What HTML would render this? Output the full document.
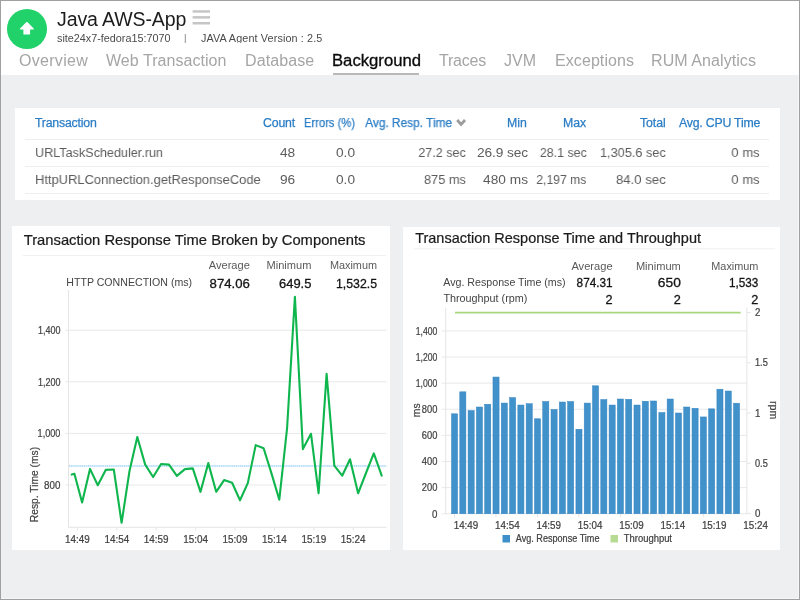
<!DOCTYPE html>
<html><head><meta charset="utf-8"><title>Java AWS-App - Background</title>
<style>
html,body{margin:0;padding:0}
body{width:800px;height:600px;overflow:hidden;position:relative;background:#eeeff1;font-family:"Liberation Sans",sans-serif}
.t{position:absolute;white-space:pre;display:block;will-change:transform}
.hdr{position:absolute;left:0;top:0;width:800px;height:75px;background:#fff}
.sub{position:absolute;left:0;top:0;width:800px;height:43px;overflow:hidden}
.circ{position:absolute;left:7.1px;top:9.2px;width:39.8px;height:39.6px;border-radius:50%;background:#21d26b}
.ul{position:absolute;left:332.5px;top:72.6px;width:86.5px;height:2.4px;background:#b9b9b9}
.card{position:absolute;background:#fff}
.sep{position:absolute;height:1.3px;background:#eeeeee}
.frame{position:absolute;left:0;top:0;width:798px;height:598px;border:1px solid #a0a0a0;box-shadow:inset -1px -1px 0 rgba(255,255,255,.45);z-index:9}
svg{position:absolute;left:0;top:0;will-change:transform}
svg text{font-family:"Liberation Sans",sans-serif}
</style></head><body>
<header class="hdr">
<div class="circ"></div>
<svg width="60" height="60" viewBox="0 0 60 60"><path d="M26.2 22.3 Q26.9 21.6 27.6 22.3 L33.7 28.4 Q34.4 29.5 33.3 29.5 H30.1 V34 Q30.1 34.6 29.5 34.6 H24 Q23.4 34.6 23.4 34 V29.5 H20.5 Q19.4 29.5 20.1 28.4 Z" fill="#fff"/></svg>
<svg width="220" height="30" viewBox="0 0 220 30"><g fill="#c6c6c6"><rect x="192.6" y="10.2" width="17.4" height="2.5"/><rect x="192.6" y="16.1" width="17.4" height="2.5"/><rect x="192.6" y="22" width="17.4" height="2.5"/></g></svg>
<span class="t" style="top:6.54px;font-size:19.5px;line-height:25px;color:#1c1c1c;letter-spacing:-0.096px;left:56.62px;">Java AWS-App</span><div class="sub"><span class="t" style="top:30.76px;font-size:10.8px;line-height:14px;color:#4a4a4a;left:56.77px;">site24x7-fedora15:7070</span><span class="t" style="top:32.01px;font-size:9.5px;line-height:12px;color:#777;left:184.22px;">|</span><span class="t" style="top:30.76px;font-size:10.8px;line-height:14px;color:#4a4a4a;letter-spacing:0.126px;left:200.87px;">JAVA Agent Version : 2.5</span></div><nav><span class="t" style="top:49.96px;font-size:16px;line-height:21px;color:#a5a5a5;letter-spacing:0.296px;left:18.96px;">Overview</span><span class="t" style="top:49.96px;font-size:16px;line-height:21px;color:#a5a5a5;letter-spacing:0.042px;left:105.96px;">Web Transaction</span><span class="t" style="top:49.96px;font-size:16px;line-height:21px;color:#a5a5a5;letter-spacing:0.101px;left:245.11px;">Database</span><span class="t" style="top:49.96px;font-size:16px;line-height:21px;color:#0a0a0a;left:331.83px;transform:scaleX(1.0418);transform-origin:0 50%;-webkit-text-stroke:0.3px #0a0a0a;">Background</span><span class="t" style="top:49.96px;font-size:16px;line-height:21px;color:#a5a5a5;letter-spacing:-0.231px;left:438.66px;">Traces</span><span class="t" style="top:49.96px;font-size:16px;line-height:21px;color:#a5a5a5;left:504.06px;">JVM</span><span class="t" style="top:49.96px;font-size:16px;line-height:21px;color:#a5a5a5;letter-spacing:0.077px;left:554.86px;">Exceptions</span><span class="t" style="top:49.96px;font-size:16px;line-height:21px;color:#a5a5a5;letter-spacing:0.077px;left:651.36px;">RUM Analytics</span></nav><div class="ul"></div>
</header>
<section>
<div class="card" style="left:15px;top:108px;width:765px;height:92px"></div>
<div class="sep" style="left:25px;top:138.5px;width:744px"></div><div class="sep" style="left:25px;top:166.2px;width:744px"></div><div class="sep" style="left:25px;top:193.1px;width:744px"></div><svg width="800" height="200" viewBox="0 0 800 200"><path d="M457.2 120 L461.1 124.4 L465 120" fill="none" stroke="#9c9c9c" stroke-width="2.8"/></svg>
<span class="t" style="top:115.24px;font-size:12.3px;line-height:16px;color:#2b7dc5;letter-spacing:-0.206px;left:34.51px;-webkit-text-stroke:0.25px #2b7dc5;">Transaction</span><span class="t" style="top:115.24px;font-size:12.3px;line-height:16px;color:#2b7dc5;letter-spacing:-0.148px;right:504.76px;-webkit-text-stroke:0.25px #2b7dc5;">Count</span><span class="t" style="top:115.24px;font-size:12.3px;line-height:16px;color:#2b7dc5;right:444.65px;transform:scaleX(0.9129);transform-origin:100% 50%;-webkit-text-stroke:0.25px #2b7dc5;">Errors (%)</span><span class="t" style="top:115.24px;font-size:12.3px;line-height:16px;color:#2b7dc5;right:348.03px;transform:scaleX(0.9649);transform-origin:100% 50%;-webkit-text-stroke:0.25px #2b7dc5;">Avg. Resp. Time</span><span class="t" style="top:115.24px;font-size:12.3px;line-height:16px;color:#2b7dc5;right:272.71px;-webkit-text-stroke:0.25px #2b7dc5;">Min</span><span class="t" style="top:115.24px;font-size:12.3px;line-height:16px;color:#2b7dc5;right:213.51px;-webkit-text-stroke:0.25px #2b7dc5;">Max</span><span class="t" style="top:115.24px;font-size:12.3px;line-height:16px;color:#2b7dc5;letter-spacing:-0.062px;right:134.57px;-webkit-text-stroke:0.25px #2b7dc5;">Total</span><span class="t" style="top:115.24px;font-size:12.3px;line-height:16px;color:#2b7dc5;letter-spacing:-0.208px;right:40.32px;-webkit-text-stroke:0.25px #2b7dc5;">Avg. CPU Time</span><span class="t" style="top:143.55px;font-size:13.7px;line-height:18px;color:#5c5c5c;left:34.80px;transform:scaleX(0.9211);transform-origin:0 50%;">URLTaskScheduler.run</span><span class="t" style="top:143.55px;font-size:13.7px;line-height:18px;color:#5c5c5c;right:504.45px;">48</span><span class="t" style="top:143.55px;font-size:13.7px;line-height:18px;color:#5c5c5c;right:444.85px;">0.0</span><span class="t" style="top:143.55px;font-size:13.7px;line-height:18px;color:#5c5c5c;right:333.90px;transform:scaleX(0.9164);transform-origin:100% 50%;">27.2 sec</span><span class="t" style="top:143.55px;font-size:13.7px;line-height:18px;color:#5c5c5c;letter-spacing:-0.104px;right:272.56px;">26.9 sec</span><span class="t" style="top:143.55px;font-size:13.7px;line-height:18px;color:#5c5c5c;right:213.50px;transform:scaleX(0.9048);transform-origin:100% 50%;">28.1 sec</span><span class="t" style="top:143.55px;font-size:13.7px;line-height:18px;color:#5c5c5c;right:134.49px;transform:scaleX(0.9299);transform-origin:100% 50%;">1,305.6 sec</span><span class="t" style="top:143.55px;font-size:13.7px;line-height:18px;color:#5c5c5c;right:39.98px;transform:scaleX(0.9545);transform-origin:100% 50%;">0 ms</span><span class="t" style="top:170.95px;font-size:13.7px;line-height:18px;color:#5c5c5c;left:34.78px;transform:scaleX(0.9448);transform-origin:0 50%;">HttpURLConnection.getResponseCode</span><span class="t" style="top:170.95px;font-size:13.7px;line-height:18px;color:#5c5c5c;right:504.45px;">96</span><span class="t" style="top:170.95px;font-size:13.7px;line-height:18px;color:#5c5c5c;right:444.85px;">0.0</span><span class="t" style="top:170.95px;font-size:13.7px;line-height:18px;color:#5c5c5c;right:333.89px;transform:scaleX(0.9339);transform-origin:100% 50%;">875 ms</span><span class="t" style="top:170.95px;font-size:13.7px;line-height:18px;color:#5c5c5c;letter-spacing:0.026px;right:272.43px;">480 ms</span><span class="t" style="top:170.95px;font-size:13.7px;line-height:18px;color:#5c5c5c;right:213.51px;transform:scaleX(0.8883);transform-origin:100% 50%;">2,197 ms</span><span class="t" style="top:170.95px;font-size:13.7px;line-height:18px;color:#5c5c5c;right:134.47px;transform:scaleX(0.9627);transform-origin:100% 50%;">84.0 sec</span><span class="t" style="top:170.95px;font-size:13.7px;line-height:18px;color:#5c5c5c;right:39.98px;transform:scaleX(0.9545);transform-origin:100% 50%;">0 ms</span>
</section>
<section>
<div class="card" style="left:12.3px;top:226.2px;width:377.7px;height:323.6px"></div>
<svg width="800" height="600" viewBox="0 0 800 600">
<text x="23.70" y="245.00" font-size="14.6" fill="#1b1b1b" text-anchor="start" textLength="341.80" lengthAdjust="spacingAndGlyphs" stroke="#1b1b1b" stroke-width="0.22">Transaction Response Time Broken by Components</text>
<rect x="22.8" y="255" width="363" height="1" fill="#f0f0f0"/>
<text x="249.90" y="269.40" font-size="11" fill="#5a5a5a" text-anchor="end" textLength="41.20" lengthAdjust="spacingAndGlyphs">Average</text>
<text x="311.40" y="269.40" font-size="11" fill="#5a5a5a" text-anchor="end" textLength="44.90" lengthAdjust="spacingAndGlyphs">Minimum</text>
<text x="377.00" y="269.40" font-size="11" fill="#5a5a5a" text-anchor="end" textLength="47.10" lengthAdjust="spacingAndGlyphs">Maximum</text>
<text x="66.30" y="285.60" font-size="11.2" fill="#444" text-anchor="start" textLength="125.80" lengthAdjust="spacingAndGlyphs">HTTP CONNECTION (ms)</text>
<text x="249.90" y="287.60" font-size="12.7" fill="#141414" text-anchor="end" textLength="40.30" lengthAdjust="spacingAndGlyphs" stroke="#141414" stroke-width="0.3">874.06</text>
<text x="311.40" y="287.60" font-size="12.7" fill="#141414" text-anchor="end" textLength="32.40" lengthAdjust="spacingAndGlyphs" stroke="#141414" stroke-width="0.3">649.5</text>
<text x="377.00" y="287.60" font-size="12.7" fill="#141414" text-anchor="end" textLength="41.00" lengthAdjust="spacingAndGlyphs" stroke="#141414" stroke-width="0.3">1,532.5</text>
<rect x="65.3" y="329.70" width="321.2" height="1" fill="#e9e9e9"/>
<rect x="65.3" y="381.30" width="321.2" height="1" fill="#e9e9e9"/>
<rect x="65.3" y="432.90" width="321.2" height="1" fill="#e9e9e9"/>
<rect x="65.3" y="484.50" width="321.2" height="1" fill="#e9e9e9"/>
<rect x="68" y="290" width="1" height="237.7" fill="#e5e5e5"/>
<rect x="68" y="526.8" width="318.5" height="1" fill="#e5e5e5"/>
<text x="60.40" y="334.10" font-size="10.7" fill="#404040" text-anchor="end" textLength="22.50" lengthAdjust="spacingAndGlyphs" stroke="#404040" stroke-width="0.22">1,400</text>
<text x="60.40" y="385.70" font-size="10.7" fill="#404040" text-anchor="end" textLength="22.50" lengthAdjust="spacingAndGlyphs" stroke="#404040" stroke-width="0.22">1,200</text>
<text x="60.40" y="437.30" font-size="10.7" fill="#404040" text-anchor="end" textLength="22.80" lengthAdjust="spacingAndGlyphs" stroke="#404040" stroke-width="0.22">1,000</text>
<text x="60.40" y="488.90" font-size="10.7" fill="#404040" text-anchor="end" textLength="16.30" lengthAdjust="spacingAndGlyphs" stroke="#404040" stroke-width="0.22">800</text>
<rect x="76.90" y="527" width="1" height="3.6" fill="#e5e5e5"/>
<text x="77.40" y="542.80" font-size="10.7" fill="#404040" text-anchor="middle" textLength="24.80" lengthAdjust="spacingAndGlyphs" stroke="#404040" stroke-width="0.22">14:49</text>
<rect x="116.30" y="527" width="1" height="3.6" fill="#e5e5e5"/>
<text x="116.80" y="542.80" font-size="10.7" fill="#404040" text-anchor="middle" textLength="24.80" lengthAdjust="spacingAndGlyphs" stroke="#404040" stroke-width="0.22">14:54</text>
<rect x="155.70" y="527" width="1" height="3.6" fill="#e5e5e5"/>
<text x="156.20" y="542.80" font-size="10.7" fill="#404040" text-anchor="middle" textLength="24.80" lengthAdjust="spacingAndGlyphs" stroke="#404040" stroke-width="0.22">14:59</text>
<rect x="195.10" y="527" width="1" height="3.6" fill="#e5e5e5"/>
<text x="195.60" y="542.80" font-size="10.7" fill="#404040" text-anchor="middle" textLength="24.80" lengthAdjust="spacingAndGlyphs" stroke="#404040" stroke-width="0.22">15:04</text>
<rect x="234.50" y="527" width="1" height="3.6" fill="#e5e5e5"/>
<text x="235.00" y="542.80" font-size="10.7" fill="#404040" text-anchor="middle" textLength="24.80" lengthAdjust="spacingAndGlyphs" stroke="#404040" stroke-width="0.22">15:09</text>
<rect x="273.90" y="527" width="1" height="3.6" fill="#e5e5e5"/>
<text x="274.40" y="542.80" font-size="10.7" fill="#404040" text-anchor="middle" textLength="24.80" lengthAdjust="spacingAndGlyphs" stroke="#404040" stroke-width="0.22">15:14</text>
<rect x="313.30" y="527" width="1" height="3.6" fill="#e5e5e5"/>
<text x="313.80" y="542.80" font-size="10.7" fill="#404040" text-anchor="middle" textLength="24.80" lengthAdjust="spacingAndGlyphs" stroke="#404040" stroke-width="0.22">15:19</text>
<rect x="352.70" y="527" width="1" height="3.6" fill="#e5e5e5"/>
<text x="353.20" y="542.80" font-size="10.7" fill="#404040" text-anchor="middle" textLength="24.80" lengthAdjust="spacingAndGlyphs" stroke="#404040" stroke-width="0.22">15:24</text>
<text transform="translate(37.9 484.6) rotate(-90)" font-size="11.2" fill="#404040" stroke="#404040" stroke-width="0.2" text-anchor="middle" textLength="75.3" lengthAdjust="spacingAndGlyphs">Resp. Time (ms)</text>
<line x1="69" y1="466.1" x2="386.5" y2="466.1" stroke="#ddeffc" stroke-width="1.5"/>
<line x1="69" y1="466.1" x2="386.5" y2="466.1" stroke="#a9d6f6" stroke-width="1.5" stroke-dasharray="1 0.9"/>
<polyline fill="none" stroke="#0fb54d" stroke-width="2.1" stroke-linejoin="round" stroke-linecap="round" points="71.7,474.6 74.4,473.8 82.1,502.4 90,468.9 97.8,485.2 105.7,469.9 113.8,469.5 121.6,522.8 129.5,471 137.3,437 145.2,464.6 153.1,477 161.1,464 169,464.6 176.9,475.9 184.9,469.1 192.8,468.4 200.5,491.8 208.3,463.1 216.2,491.8 224.1,480.1 232.1,482.7 240,500.3 247.8,483.1 255.7,445.1 263.6,448.3 271.4,473.1 279.3,499.7 287.1,428 294.9,296.8 302.9,449.1 311,433.8 318.6,493.3 326.6,373.8 334.3,465.7 342.2,475.7 350,459.3 358.1,493.3 366,473 373.8,453.4 381.7,475.7"/>
</svg>
</section>
<section>
<div class="card" style="left:403px;top:226.8px;width:377px;height:323px"></div>
<svg width="800" height="600" viewBox="0 0 800 600">
<text x="415.20" y="242.60" font-size="14.6" fill="#1b1b1b" text-anchor="start" textLength="285.80" lengthAdjust="spacingAndGlyphs" stroke="#1b1b1b" stroke-width="0.22">Transaction Response Time and Throughput</text>
<rect x="413.7" y="248.3" width="361.5" height="1" fill="#f0f0f0"/>
<text x="612.60" y="270.00" font-size="11" fill="#5a5a5a" text-anchor="end" textLength="41.20" lengthAdjust="spacingAndGlyphs">Average</text>
<text x="680.80" y="270.00" font-size="11" fill="#5a5a5a" text-anchor="end" textLength="44.90" lengthAdjust="spacingAndGlyphs">Minimum</text>
<text x="758.40" y="270.00" font-size="11" fill="#5a5a5a" text-anchor="end" textLength="47.10" lengthAdjust="spacingAndGlyphs">Maximum</text>
<text x="443.30" y="285.60" font-size="11.2" fill="#444" text-anchor="start" textLength="122.30" lengthAdjust="spacingAndGlyphs">Avg. Response Time (ms)</text>
<text x="443.40" y="301.80" font-size="11.2" fill="#444" text-anchor="start" textLength="84.00" lengthAdjust="spacingAndGlyphs">Throughput (rpm)</text>
<text x="612.60" y="286.80" font-size="12.7" fill="#141414" text-anchor="end" textLength="36.00" lengthAdjust="spacingAndGlyphs" stroke="#141414" stroke-width="0.3">874.31</text>
<text x="680.80" y="286.80" font-size="12.7" fill="#141414" text-anchor="end" textLength="23.00" lengthAdjust="spacingAndGlyphs" stroke="#141414" stroke-width="0.3">650</text>
<text x="758.40" y="286.80" font-size="12.7" fill="#141414" text-anchor="end" textLength="29.40" lengthAdjust="spacingAndGlyphs" stroke="#141414" stroke-width="0.3">1,533</text>
<text x="612.60" y="303.90" font-size="12.7" fill="#141414" text-anchor="end" stroke="#141414" stroke-width="0.3">2</text>
<text x="680.80" y="303.90" font-size="12.7" fill="#141414" text-anchor="end" stroke="#141414" stroke-width="0.3">2</text>
<text x="758.40" y="303.90" font-size="12.7" fill="#141414" text-anchor="end" stroke="#141414" stroke-width="0.3">2</text>
<rect x="441.8" y="330.41" width="305" height="1" fill="#e9e9e9"/>
<text x="437.40" y="334.66" font-size="10.3" fill="#404040" text-anchor="end" textLength="21.60" lengthAdjust="spacingAndGlyphs" stroke="#404040" stroke-width="0.22">1,400</text>
<rect x="441.8" y="356.53" width="305" height="1" fill="#e9e9e9"/>
<text x="437.40" y="360.78" font-size="10.3" fill="#404040" text-anchor="end" textLength="21.60" lengthAdjust="spacingAndGlyphs" stroke="#404040" stroke-width="0.22">1,200</text>
<rect x="441.8" y="382.65" width="305" height="1" fill="#e9e9e9"/>
<text x="437.40" y="386.90" font-size="10.3" fill="#404040" text-anchor="end" textLength="21.60" lengthAdjust="spacingAndGlyphs" stroke="#404040" stroke-width="0.22">1,000</text>
<rect x="441.8" y="408.77" width="305" height="1" fill="#e9e9e9"/>
<text x="437.40" y="413.02" font-size="10.3" fill="#404040" text-anchor="end" textLength="15.60" lengthAdjust="spacingAndGlyphs" stroke="#404040" stroke-width="0.22">800</text>
<rect x="441.8" y="434.89" width="305" height="1" fill="#e9e9e9"/>
<text x="437.40" y="439.14" font-size="10.3" fill="#404040" text-anchor="end" textLength="15.60" lengthAdjust="spacingAndGlyphs" stroke="#404040" stroke-width="0.22">600</text>
<rect x="441.8" y="461.01" width="305" height="1" fill="#e9e9e9"/>
<text x="437.40" y="465.26" font-size="10.3" fill="#404040" text-anchor="end" textLength="15.60" lengthAdjust="spacingAndGlyphs" stroke="#404040" stroke-width="0.22">400</text>
<rect x="441.8" y="487.13" width="305" height="1" fill="#e9e9e9"/>
<text x="437.40" y="491.38" font-size="10.3" fill="#404040" text-anchor="end" textLength="15.60" lengthAdjust="spacingAndGlyphs" stroke="#404040" stroke-width="0.22">200</text>
<rect x="441.8" y="513.25" width="305" height="1" fill="#e9e9e9"/>
<text x="437.40" y="517.50" font-size="10.3" fill="#404040" text-anchor="end" textLength="5.40" lengthAdjust="spacingAndGlyphs" stroke="#404040" stroke-width="0.22">0</text>
<rect x="445.2" y="307.5" width="1" height="206.7" fill="#e5e5e5"/>
<rect x="746.3" y="307.5" width="1" height="206.7" fill="#e5e5e5"/>
<rect x="746.8" y="312.10" width="4" height="1" fill="#e5e5e5"/>
<text x="755.00" y="316.20" font-size="10.2" fill="#404040" text-anchor="start" textLength="5.40" lengthAdjust="spacingAndGlyphs" stroke="#404040" stroke-width="0.22">2</text>
<rect x="746.8" y="362.30" width="4" height="1" fill="#e5e5e5"/>
<text x="755.00" y="366.40" font-size="10.2" fill="#404040" text-anchor="start" textLength="12.80" lengthAdjust="spacingAndGlyphs" stroke="#404040" stroke-width="0.22">1.5</text>
<rect x="746.8" y="412.50" width="4" height="1" fill="#e5e5e5"/>
<text x="755.00" y="416.60" font-size="10.2" fill="#404040" text-anchor="start" textLength="5.40" lengthAdjust="spacingAndGlyphs" stroke="#404040" stroke-width="0.22">1</text>
<rect x="746.8" y="462.70" width="4" height="1" fill="#e5e5e5"/>
<text x="755.00" y="466.80" font-size="10.2" fill="#404040" text-anchor="start" textLength="12.80" lengthAdjust="spacingAndGlyphs" stroke="#404040" stroke-width="0.22">0.5</text>
<rect x="746.8" y="512.90" width="4" height="1" fill="#e5e5e5"/>
<text x="755.00" y="517.00" font-size="10.2" fill="#404040" text-anchor="start" textLength="5.40" lengthAdjust="spacingAndGlyphs" stroke="#404040" stroke-width="0.22">0</text>
<text transform="translate(419.7 410.3) rotate(-90)" font-size="11" fill="#404040" stroke="#404040" stroke-width="0.2" text-anchor="middle" textLength="13.7" lengthAdjust="spacingAndGlyphs">ms</text>
<text transform="translate(769.9 410.2) rotate(90)" font-size="11.4" fill="#404040" stroke="#404040" stroke-width="0.2" text-anchor="middle" textLength="18.2" lengthAdjust="spacingAndGlyphs">rpm</text>
<g fill="#4191ca" stroke="#3485c3" stroke-width="0.5">
<rect x="451.50" y="413.80" width="6.10" height="99.95"/>
<rect x="459.79" y="391.82" width="6.10" height="121.93"/>
<rect x="468.09" y="410.53" width="6.10" height="103.22"/>
<rect x="476.38" y="407.00" width="6.10" height="106.75"/>
<rect x="484.68" y="404.25" width="6.10" height="109.50"/>
<rect x="492.97" y="377.03" width="6.10" height="136.72"/>
<rect x="501.26" y="403.07" width="6.10" height="110.68"/>
<rect x="509.56" y="397.57" width="6.10" height="116.18"/>
<rect x="517.85" y="405.03" width="6.10" height="108.72"/>
<rect x="526.15" y="403.72" width="6.10" height="110.03"/>
<rect x="534.44" y="418.77" width="6.10" height="94.98"/>
<rect x="542.73" y="401.50" width="6.10" height="112.25"/>
<rect x="551.03" y="409.48" width="6.10" height="104.27"/>
<rect x="559.32" y="402.02" width="6.10" height="111.73"/>
<rect x="567.62" y="401.50" width="6.10" height="112.25"/>
<rect x="575.91" y="429.24" width="6.10" height="84.51"/>
<rect x="584.20" y="403.07" width="6.10" height="110.68"/>
<rect x="592.50" y="385.80" width="6.10" height="127.95"/>
<rect x="600.79" y="399.54" width="6.10" height="114.21"/>
<rect x="609.09" y="405.03" width="6.10" height="108.72"/>
<rect x="617.38" y="399.01" width="6.10" height="114.74"/>
<rect x="625.67" y="399.28" width="6.10" height="114.47"/>
<rect x="633.97" y="405.03" width="6.10" height="108.72"/>
<rect x="642.26" y="401.24" width="6.10" height="112.51"/>
<rect x="650.56" y="400.98" width="6.10" height="112.77"/>
<rect x="658.85" y="412.49" width="6.10" height="101.26"/>
<rect x="667.14" y="399.01" width="6.10" height="114.74"/>
<rect x="675.44" y="413.01" width="6.10" height="100.74"/>
<rect x="683.73" y="407.00" width="6.10" height="106.75"/>
<rect x="692.03" y="408.30" width="6.10" height="105.45"/>
<rect x="700.32" y="416.94" width="6.10" height="96.81"/>
<rect x="708.61" y="408.83" width="6.10" height="104.92"/>
<rect x="716.91" y="389.20" width="6.10" height="124.55"/>
<rect x="725.20" y="391.03" width="6.10" height="122.72"/>
<rect x="733.50" y="403.20" width="6.10" height="110.55"/>
</g>
<line x1="455" y1="312.6" x2="740.7" y2="312.6" stroke="#aad77d" stroke-width="1.7"/>
<rect x="454.00" y="514" width="1" height="3.4" fill="#e5e5e5"/>
<text x="466.00" y="528.80" font-size="10.5" fill="#404040" text-anchor="middle" textLength="24.60" lengthAdjust="spacingAndGlyphs" stroke="#404040" stroke-width="0.22">14:49</text>
<rect x="495.47" y="514" width="1" height="3.4" fill="#e5e5e5"/>
<text x="507.37" y="528.80" font-size="10.5" fill="#404040" text-anchor="middle" textLength="24.60" lengthAdjust="spacingAndGlyphs" stroke="#404040" stroke-width="0.22">14:54</text>
<rect x="536.94" y="514" width="1" height="3.4" fill="#e5e5e5"/>
<text x="548.74" y="528.80" font-size="10.5" fill="#404040" text-anchor="middle" textLength="24.60" lengthAdjust="spacingAndGlyphs" stroke="#404040" stroke-width="0.22">14:59</text>
<rect x="578.41" y="514" width="1" height="3.4" fill="#e5e5e5"/>
<text x="590.11" y="528.80" font-size="10.5" fill="#404040" text-anchor="middle" textLength="24.60" lengthAdjust="spacingAndGlyphs" stroke="#404040" stroke-width="0.22">15:04</text>
<rect x="619.88" y="514" width="1" height="3.4" fill="#e5e5e5"/>
<text x="631.48" y="528.80" font-size="10.5" fill="#404040" text-anchor="middle" textLength="24.60" lengthAdjust="spacingAndGlyphs" stroke="#404040" stroke-width="0.22">15:09</text>
<rect x="661.35" y="514" width="1" height="3.4" fill="#e5e5e5"/>
<text x="672.85" y="528.80" font-size="10.5" fill="#404040" text-anchor="middle" textLength="24.60" lengthAdjust="spacingAndGlyphs" stroke="#404040" stroke-width="0.22">15:14</text>
<rect x="702.82" y="514" width="1" height="3.4" fill="#e5e5e5"/>
<text x="714.22" y="528.80" font-size="10.5" fill="#404040" text-anchor="middle" textLength="24.60" lengthAdjust="spacingAndGlyphs" stroke="#404040" stroke-width="0.22">15:19</text>
<text x="755.59" y="528.80" font-size="10.5" fill="#404040" text-anchor="middle" textLength="24.60" lengthAdjust="spacingAndGlyphs" stroke="#404040" stroke-width="0.22">15:24</text>
<rect x="502.5" y="535" width="7.5" height="7.5" fill="#3f8fca"/>
<text x="515.80" y="542.10" font-size="10.3" fill="#404040" text-anchor="start" textLength="83.70" lengthAdjust="spacingAndGlyphs" stroke="#404040" stroke-width="0.22">Avg. Response Time</text>
<rect x="610.5" y="535" width="7.5" height="7.5" fill="#b7db93"/>
<text x="623.80" y="542.10" font-size="10.3" fill="#404040" text-anchor="start" textLength="48.20" lengthAdjust="spacingAndGlyphs" stroke="#404040" stroke-width="0.22">Throughput</text>
</svg>
</section>
<div class="frame"></div>
</body></html>
